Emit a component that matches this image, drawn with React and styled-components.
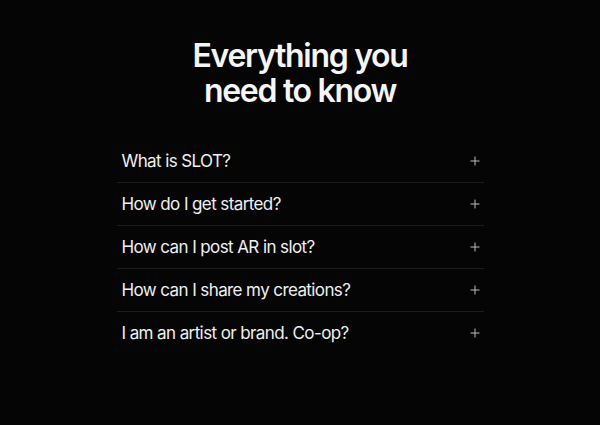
import styled, { createGlobalStyle } from "styled-components";

const GlobalStyle = createGlobalStyle`
  html, body {
    margin: 0;
    padding: 0;
    background: #050505;
  }
  body {
    font-family: Inter, "Noto Sans", sans-serif;
    -webkit-font-smoothing: antialiased;
  }
`;

const questions = [
  "What is SLOT?",
  "How do I get started?",
  "How can I post AR in slot?",
  "How can I share my creations?",
  "I am an artist or brand. Co-op?",
];

function App() {
  return (
    <>
      <GlobalStyle />
      <Page>
        <Title>
          Everything you
          <br />
          need to know
        </Title>
        <List>
          {questions.map((q, i) => (
            <Row key={q} $last={i === questions.length - 1}>
              <Question>{q}</Question>
              <PlusIcon />
            </Row>
          ))}
        </List>
      </Page>
    </>
  );
}

function PlusIcon() {
  return (
    <Plus viewBox="0 0 10 10" width="10" height="10">
      <path d="M5 0.5V9.5M0.5 5H9.5" stroke="#bdbdbd" strokeWidth="1" />
    </Plus>
  );
}

const Page = styled.div`
  width: 600px;
  height: 425px;
  display: flex;
  flex-direction: column;
  align-items: center;
  padding-top: 38px;
  box-sizing: border-box;
  background: #050505;
`;

const Title = styled.h1`
  margin: 0;
  color: #f5f5f5;
  font-size: 32px;
  line-height: 35px;
  font-weight: 600;
  letter-spacing: -1.3px;
  text-align: center;
`;

const List = styled.div`
  width: 367px;
  margin-top: 32px;
  display: flex;
  flex-direction: column;
`;

const Row = styled.div`
  height: 43px;
  display: flex;
  align-items: center;
  justify-content: space-between;
  padding: 0 4px 0 5px;
  border-bottom: 1px solid ${(p) => (p.$last ? "transparent" : "#1c1c1c")};
  box-sizing: border-box;
`;

const Question = styled.span`
  color: #f0f0f0;
  font-size: 17px;
  letter-spacing: -0.6px;
  font-weight: 400;
`;

const Plus = styled.svg`
  display: block;
  flex-shrink: 0;
`;

export default App;
